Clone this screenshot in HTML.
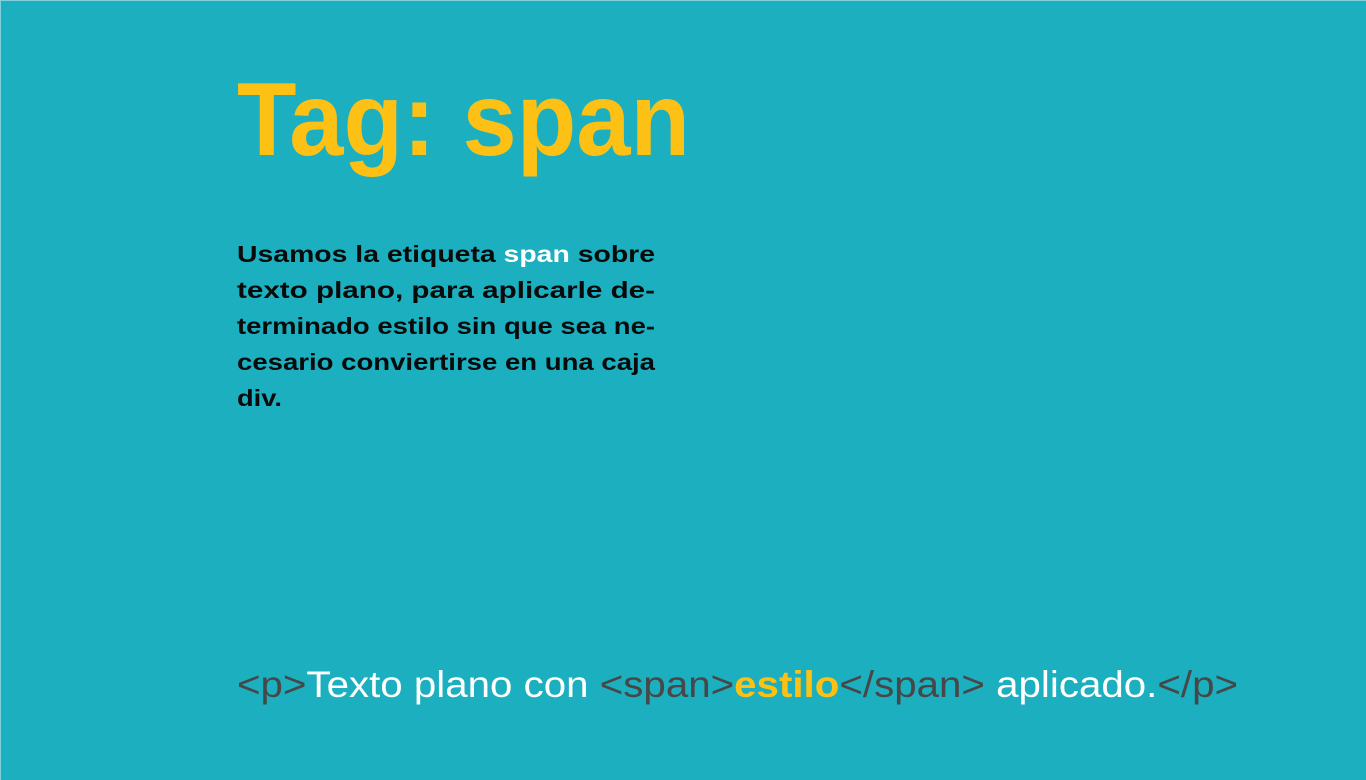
<!DOCTYPE html>
<html><head><meta charset="utf-8"><style>
html,body{margin:0;padding:0;background:#1bafbf;}
svg{display:block}
</style></head><body>
<svg width="1366" height="780" xmlns="http://www.w3.org/2000/svg">
<rect x="0" y="0" width="1366" height="780" fill="#1bafbf"/>
<rect x="0" y="0" width="1366" height="1" fill="#7fd0da"/>
<rect x="0" y="0" width="1" height="780" fill="#7fd0da"/>
<g font-family="Liberation Sans, sans-serif">
<text x="237" y="155" font-size="104" font-weight="bold" fill="#fdc115" textLength="453" lengthAdjust="spacingAndGlyphs">Tag: span</text>
<g font-size="23.5" font-weight="bold" fill="#0a0a0a">
<text x="237" y="262" textLength="418" lengthAdjust="spacingAndGlyphs">Usamos la etiqueta <tspan fill="#ffffff">span</tspan> sobre</text>
<text x="237" y="298" textLength="418" lengthAdjust="spacingAndGlyphs">texto plano, para aplicarle de-</text>
<text x="237" y="334" textLength="418" lengthAdjust="spacingAndGlyphs">terminado estilo sin que sea ne-</text>
<text x="237" y="370" textLength="418" lengthAdjust="spacingAndGlyphs">cesario conviertirse en una caja</text>
<text x="237" y="406" textLength="45" lengthAdjust="spacingAndGlyphs">div.</text>
</g>
<text x="237" y="697" font-size="37" fill="#ffffff" textLength="1001" lengthAdjust="spacingAndGlyphs"><tspan fill="#474747">&lt;p&gt;</tspan>Texto plano con <tspan fill="#474747">&lt;span&gt;</tspan><tspan fill="#fdc115" font-weight="bold">estilo</tspan><tspan fill="#474747">&lt;/span&gt;</tspan> aplicado.<tspan fill="#474747">&lt;/p&gt;</tspan></text>
</g>
</svg>
</body></html>
